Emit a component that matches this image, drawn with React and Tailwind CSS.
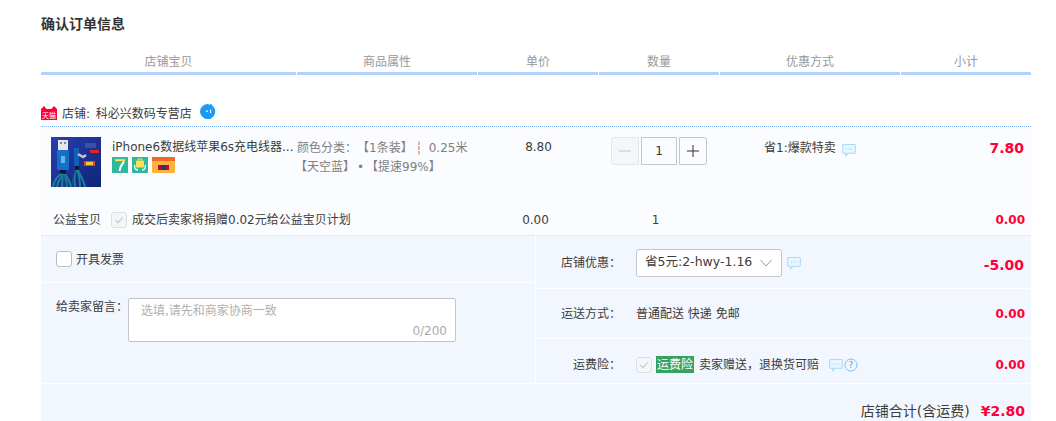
function Comment({ className = "" }) {
  return (
    <svg viewBox="0 0 14 14" className={`w-[14px] h-[14px] ${className}`} fill="none">
      <path d="M1.5 1.5h11a.8.8 0 0 1 .8.8v7.2a.8.8 0 0 1-.8.8H6l-2.2 2.4v-2.4H1.5a.8.8 0 0 1-.8-.8V2.3a.8.8 0 0 1 .8-.8z" fill="#eaf6ff" stroke="#a9dcfb" strokeWidth="1.1" />
      <circle cx="4.4" cy="6" r=".6" fill="#7cc8f5" />
      <circle cx="7" cy="6" r=".6" fill="#7cc8f5" />
      <circle cx="9.6" cy="6" r=".6" fill="#7cc8f5" />
    </svg>
  );
}

function Check() {
  return (
    <span className="w-4 h-4 shrink-0 rounded-[3px] border border-[#dcdee3] bg-[#f5f6f8] flex items-center justify-center">
      <svg viewBox="0 0 10 10" className="w-[10px] h-[10px]" fill="none"><path d="M1.5 5.2 4 7.6 8.6 2.6" stroke="#c4c6cc" strokeWidth="1.1" /></svg>
    </span>
  );
}

function Product() {
  return (
    <svg viewBox="0 0 50 50" className="w-[50px] h-[50px] shrink-0 block">
      <defs>
        <linearGradient id="pbg" x1="0" y1="0" x2="1" y2="1">
          <stop offset="0" stopColor="#2a3fae" />
          <stop offset="1" stopColor="#0f2478" />
        </linearGradient>
      </defs>
      <rect width="50" height="50" fill="url(#pbg)" />
      <rect x="7" y="3" width="10" height="10" fill="#e4e7ec" />
      <rect x="9" y="5" width="2" height="2" fill="#7d8794" />
      <rect x="13" y="5" width="2" height="2" fill="#7d8794" />
      <rect x="6" y="13" width="12" height="20" rx="1" fill="#1270c9" />
      <rect x="10" y="19" width="4" height="7" fill="#6fb0e6" />
      <rect x="9" y="33" width="6" height="4" fill="#0e1740" />
      <path d="M23 11h5v18h-5z" fill="#1260b8" />
      <path d="M27 17l5 3 3-2" stroke="#c3c7cf" strokeWidth="2.6" fill="none" />
      <rect x="24" y="29" width="4" height="4" fill="#0e1740" />
      <path d="M2 50c1-8 6-12 9-13M6 50c1-7 4-10 6-13M11 50c0-5 1-9 1-13M16 50c0-6-2-9-3-13M20 50c-1-6-4-10-6-13M24 50c-1-7-1-12 1-17M29 50c0-7-1-12-3-17M34 50c-1-6-5-12-7-17" stroke="#1b7e9c" strokeWidth="2" fill="none" />
      <path d="M4 50c1-6 5-10 7-12M13 50c0-4 0-9 0-12M22 50c-1-5-1-10 3-16" stroke="#0e5270" strokeWidth="1" fill="none" />
      <rect x="39" y="13" width="9" height="3" fill="#e0242e" />
      <rect x="34" y="6" width="11" height="5" fill="#3a4fa8" />
      <rect x="33" y="24" width="11" height="5" fill="#e8402a" />
      <rect x="35" y="25" width="7" height="3" fill="#f5c542" />
    </svg>
  );
}

export default function App() {
  return (
    <div className="w-[1056px] h-[421px] overflow-hidden bg-white text-xs text-[#3c3c3c] pl-[41px] [text-spacing-trim:space-all] [font-family:'DejaVu_Sans','Noto_Sans_CJK_SC',sans-serif]">
      <div className="w-[990px]">
        <h1 className="h-[48px] pt-[15px] text-[14px] leading-[18px] font-bold text-[#333]">确认订单信息</h1>

        <div className="grid grid-cols-[256px_181px_121px_121px_181px_130px] h-[27px] text-[#999]">
          {["店铺宝贝", "商品属性", "单价", "数量", "优惠方式", "小计"].map((t, i) => (
            <div key={t} className={`h-[27px] pt-[5px] leading-[18px] text-center border-b-[3px] border-[#b2d1fd] ${i < 5 ? "mr-px" : ""}`}>{t}</div>
          ))}
        </div>

        <div className="h-[52px] pt-[30px] flex items-start border-b border-dotted border-[#80b2ff]">
          <svg viewBox="0 0 16 14" className="w-4 h-[14px] mt-[1px]">
            <path d="M0 3 3 0l2.5 3h5L13 0l3 3v11H0z" fill="#ff0036" />
            <text x="8" y="11.5" textAnchor="middle" fontSize="7" fill="#fff">天猫</text>
          </svg>
          <span className="ml-[5px] leading-[18px] text-[#3c3c3c]">店铺: <span className="ml-[2px]">科必兴数码专营店</span></span>
          <svg viewBox="0 0 16 16" className="w-4 h-4 ml-2 -mt-[2px]">
            <path d="M8 1C9.5 2 10.5 1.8 11.5.5 11.6 2 12 2.5 13 3.2a7.6 7.6 0 1 1-5-2.2z" fill="#1a9cf5" />
            <circle cx="7" cy="8.2" r=".9" fill="#fff" />
            <rect x="10" y="6.5" width="1.1" height="3.6" fill="#fff" />
          </svg>
        </div>

        <div className="bg-[#fbfcff]">
          <div className="grid grid-cols-[256px_181px_121px_121px_181px_130px] h-[78px] pt-[10px]">
            <div className="flex pl-[10px] gap-[11px]">
              <Product />
              <div className="min-w-0">
                <div className="w-[184px] truncate leading-[18px] mt-[1px] text-[#3c3c3c]">iPhone6数据线苹果6s充电线器...</div>
                <div className="flex gap-1 mt-[1px]">
                  <span className="w-4 h-4 bg-[#2fb99b] flex items-center justify-center">
                    <svg viewBox="0 0 16 16" className="w-4 h-4"><path d="M3 3.2h10" stroke="#ffe14d" strokeWidth="2" fill="none" /><path d="M12 4.5C9.5 7.5 8 10.5 7.5 14" stroke="#fff" strokeWidth="2" fill="none" /></svg>
                  </span>
                  <span className="w-4 h-4 bg-[#2fb99b] flex items-center justify-center">
                    <svg viewBox="0 0 16 16" className="w-4 h-4"><path d="M6 3.5V2h4v1.5" stroke="#ffe14d" fill="none" /><rect x="4" y="3.5" width="8" height="7" rx="1" fill="#ffe14d" /><path d="M2.5 8c0 3.5 1.5 5 3.5 5M13.5 8c0 3.5-1.5 5-3.5 5" stroke="#fff" strokeWidth="1.4" fill="none" /></svg>
                  </span>
                  <span className="w-[23px] h-4 rounded-[1px] bg-[#ffb13d] flex flex-col">
                    <span className="h-[4px] bg-[#ee6a2c]" />
                    <span className="flex-1 flex items-center justify-center"><span className="w-[11px] h-[5px] bg-[#b3122e] flex justify-center"><span className="w-[5px] h-[5px] bg-[#1d3a8a]" /></span></span>
                  </span>
                </div>
              </div>
            </div>
            <div className="text-[#808080] leading-[19px] pt-[2px] whitespace-nowrap">
              <div>颜色分类：【1条装】<span className="mx-[2.5px]">┆</span> 0.25米</div>
              <div className="-ml-[2px]">【天空蓝】<span className="mx-[2px]">•</span>【提速99%】</div>
            </div>
            <div className="text-center leading-[18px] pt-px text-[#3c3c3c]">8.80</div>
            <div className="pl-[12px]">
              <div className="flex gap-[2px] h-[28px]">
                <span className="w-[28px] h-[28px] rounded-l-[3px] border border-[#e4e5e9] bg-[#f5f6f8] text-[#c4c6cc] flex items-center justify-center">
                  <svg viewBox="0 0 12 12" className="w-3 h-3"><path d="M0 6h12" stroke="currentColor" /></svg>
                </span>
                <span className="w-[36px] h-[28px] border border-[#c4c6cf] flex items-center justify-center text-[#333]">1</span>
                <span className="w-[28px] h-[28px] rounded-r-[3px] border border-[#c4c6cf] text-[#333] flex items-center justify-center">
                  <svg viewBox="0 0 12 12" className="w-3 h-3"><path d="M0 6h12M6 0v12" stroke="currentColor" /></svg>
                </span>
              </div>
            </div>
            <div className="pl-[44px] flex items-start">
              <span className="leading-[18px] pt-[2px] text-[#3c3c3c]">省1:爆款特卖</span>
              <Comment className="ml-[6px] mt-[6px]" />
            </div>
            <div className="text-right pr-[7px] pt-px text-[14px] leading-[20px] font-bold text-[#ff0036]">7.80</div>
          </div>

          <div className="grid grid-cols-[256px_181px_121px_121px_181px_130px] h-[31px] items-center border-b border-dotted border-[#d9dde6]">
            <div className="flex items-center pl-3 col-span-2">
              <span className="w-[58px] shrink-0 text-[#3c3c3c]">公益宝贝</span>
              <Check />
              <span className="ml-[5px]">成交后卖家将捐赠0.02元给公益宝贝计划</span>
            </div>
            <div className="text-center pr-[6px]">0.00</div>
            <div className="text-center pr-[8px]">1</div>
            <div />
            <div className="text-right pr-[6px] font-bold text-[#ff0036]">0.00</div>
          </div>
        </div>

        <div className="bg-[#f2f6ff]">
          <div className="flex">
            <div className="w-[495px] border-r border-white">
              <div className="h-[47px] pl-[15px] flex items-center border-b border-white">
                <span className="w-4 h-4 rounded-[3px] border border-[#b9bcc4] bg-white" />
                <span className="ml-1 mt-px">开具发票</span>
              </div>
              <div className="h-[101px] flex pl-[15px] pt-[15px] border-b border-white">
                <span className="w-[72px] leading-[18px] shrink-0">给卖家留言：</span>
                <div className="w-[328px] h-[44px] bg-white rounded-[2px] border border-[#c4c6cf] pl-3 pr-[8px]">
                  <div className="pt-[3px] leading-[18px] text-[#b0b0b0]">选填,请先和商家协商一致</div>
                  <div className="text-right text-[#aaa] leading-[16px] pt-[3px]">0/200</div>
                </div>
              </div>
            </div>
            <div className="flex-1">
              <div className="h-[53px] flex items-center border-b border-white pt-px">
                <span className="w-[85px] text-right shrink-0">店铺优惠：</span>
                <div className="ml-[15px] w-[146px] h-[28px] bg-white border border-[#c4c6cf] rounded-[3px] flex items-center justify-between pl-2 pr-[9px]">
                  <span className="text-[12.5px] text-[#3c3c3c] whitespace-nowrap">省5元:2-hwy-1.16</span>
                  <svg viewBox="0 0 12 8" className="w-3 h-2"><path d="M.5 1 6 7l5.5-6" stroke="#999" fill="none" /></svg>
                </div>
                <Comment className="ml-[5px]" />
                <span className="ml-auto pr-[7px] mt-[5px] text-[14px] font-bold text-[#ff0036]">-5.00</span>
              </div>
              <div className="h-[50px] flex items-center border-b border-white pt-px">
                <span className="w-[85px] text-right shrink-0">运送方式：</span>
                <span className="ml-[15px]">普通配送 快递 免邮</span>
                <span className="ml-auto pr-[6px] -mt-px font-bold text-[#ff0036]">0.00</span>
              </div>
              <div className="h-[45px] flex items-center border-b border-white pt-[7px]">
                <span className="w-[85px] text-right shrink-0">运费险：</span>
                <span className="ml-[15px]"><Check /></span>
                <span className="ml-1 w-[38px] h-[17px] bg-[#35a25f] text-white flex items-center justify-center">运费险</span>
                <span className="ml-[5px] whitespace-nowrap">卖家赠送，退换货可赔</span>
                <Comment className="ml-[10px]" />
                <svg viewBox="0 0 14 14" className="w-[14px] h-[14px] ml-px">
                  <circle cx="7" cy="7" r="6" fill="#f2f6ff" stroke="#7cc0f5" />
                  <text x="7" y="10.2" textAnchor="middle" fontSize="9" fill="#4ea6ee">?</text>
                </svg>
                <span className="ml-auto pr-[6px] mt-px font-bold text-[#ff0036]">0.00</span>
              </div>
            </div>
          </div>
          <div className="h-[37px] flex justify-end items-start pt-[16px] pr-[6px]">
            <span className="text-[14px] leading-[22px] text-[#3c3c3c]">店铺合计(含运费)</span>
            <span className="ml-[11px] text-[14px] leading-[22px] font-bold text-[#ff0036]">¥2.80</span>
          </div>
        </div>
      </div>
    </div>
  );
}
